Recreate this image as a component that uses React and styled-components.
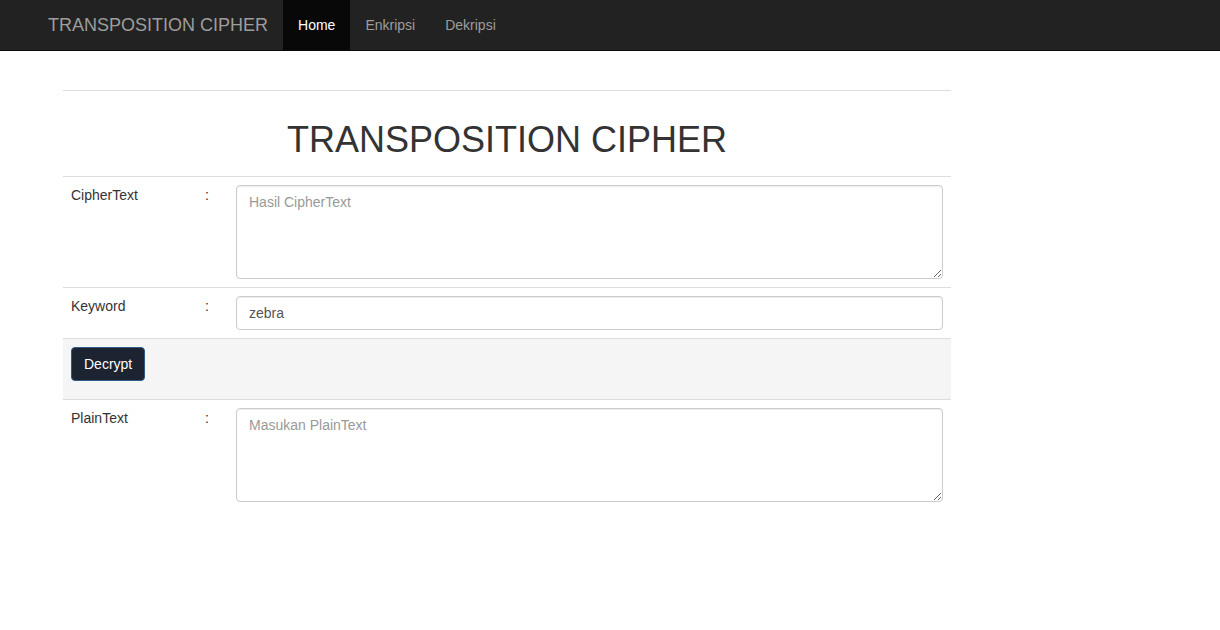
import React from "react";
import styled, { createGlobalStyle } from "styled-components";

const Global = createGlobalStyle`
  html, body { margin: 0; padding: 0; background: #fff; }
  body {
    font-family: "Liberation Sans", Arial, Helvetica, sans-serif;
    font-size: 14px;
    line-height: 1.42857;
    color: #333;
  }
  * { box-sizing: border-box; }
`;

const NavBar = styled.nav`
  height: 51px;
  background: #222;
  border-bottom: 1px solid #080808;
  display: flex;
  align-items: stretch;
  padding-left: 33px;
`;

const Brand = styled.a`
  display: block;
  padding: 15px 15px 0;
  font-size: 18px;
  line-height: 20px;
  color: #9d9d9d;
  text-decoration: none;
  height: 50px;
`;

const NavList = styled.ul`
  display: flex;
  list-style: none;
  margin: 0;
  padding: 0;
`;

const NavItem = styled.li`
  display: flex;
`;

const NavLink = styled.a`
  display: block;
  height: 50px;
  padding: 15px 15px 0;
  line-height: 20px;
  color: ${(p) => (p.$active ? "#fff" : "#9d9d9d")};
  background: ${(p) => (p.$active ? "#080808" : "transparent")};
  text-decoration: none;
`;

const Main = styled.main`
  padding: 39px 0 0 63px;
`;

const Table = styled.div`
  width: 888px;
  display: flex;
  flex-direction: column;
`;

const Row = styled.div`
  display: grid;
  grid-template-columns: 134px 31px 1fr;
  border-top: 1px solid #ddd;
  background: ${(p) => (p.$shade ? "#f5f5f5" : "transparent")};
`;

const TitleRow = styled.div`
  border-top: 1px solid #ddd;
  padding: 8px;
  height: 86px;
  display: flex;
  justify-content: center;
`;

const Title = styled.h1`
  margin: 21px 0 0;
  font-size: 36px;
  font-weight: 500;
  line-height: 1.1;
  color: #333;
`;

const Cell = styled.div`
  padding: 8px;
  line-height: 20px;
  color: #333;
`;

const ButtonCell = styled.div`
  grid-column: 1 / -1;
  padding: 8px 8px 18px;
`;

const TextArea = styled.textarea`
  display: block;
  width: 100%;
  height: 94px;
  padding: 6px 12px;
  font-family: "Liberation Sans", Arial, sans-serif;
  font-size: 14px;
  line-height: 20px;
  color: #555;
  border: 1px solid #ccc;
  border-radius: 4px;
  box-shadow: inset 0 1px 1px rgba(0, 0, 0, 0.075);
  resize: vertical;
  &::placeholder { color: #999; }
`;

const Input = styled.input`
  display: block;
  width: 100%;
  height: 34px;
  padding: 6px 12px;
  font-family: "Liberation Sans", Arial, sans-serif;
  font-size: 14px;
  color: #555;
  border: 1px solid #ccc;
  border-radius: 4px;
  box-shadow: inset 0 1px 1px rgba(0, 0, 0, 0.075);
`;

const Button = styled.button`
  height: 34px;
  padding: 6px 12px;
  font-family: "Liberation Sans", Arial, sans-serif;
  font-size: 14px;
  line-height: 20px;
  color: #fff;
  background: #1c2331;
  border: 1px solid #2e5a85;
  border-radius: 4px;
  cursor: pointer;
`;

export default function App() {
  return (
    <>
      <Global />
      <NavBar>
        <Brand href="#">TRANSPOSITION CIPHER</Brand>
        <NavList>
          <NavItem><NavLink href="#" $active>Home</NavLink></NavItem>
          <NavItem><NavLink href="#">Enkripsi</NavLink></NavItem>
          <NavItem><NavLink href="#">Dekripsi</NavLink></NavItem>
        </NavList>
      </NavBar>
      <Main>
        <Table>
          <TitleRow>
            <Title>TRANSPOSITION CIPHER</Title>
          </TitleRow>
          <Row>
            <Cell>CipherText</Cell>
            <Cell>:</Cell>
            <Cell><TextArea placeholder="Hasil CipherText" /></Cell>
          </Row>
          <Row>
            <Cell>Keyword</Cell>
            <Cell>:</Cell>
            <Cell><Input defaultValue="zebra" /></Cell>
          </Row>
          <Row $shade>
            <ButtonCell><Button>Decrypt</Button></ButtonCell>
          </Row>
          <Row>
            <Cell>PlainText</Cell>
            <Cell>:</Cell>
            <Cell><TextArea placeholder="Masukan PlainText" /></Cell>
          </Row>
        </Table>
      </Main>
    </>
  );
}
